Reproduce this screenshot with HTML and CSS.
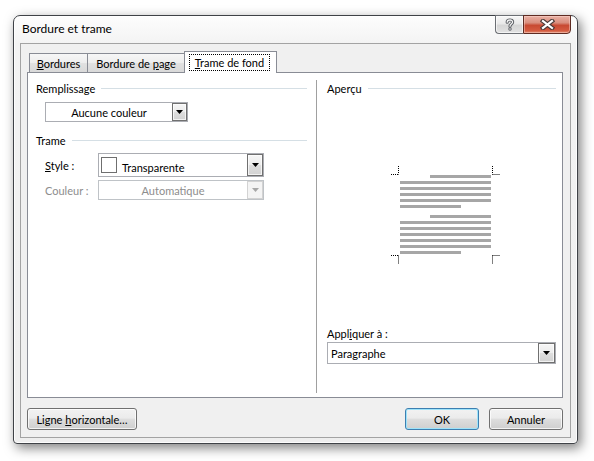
FILE: index.html
```html
<!DOCTYPE html>
<html lang="fr">
<head>
<meta charset="utf-8">
<title>Bordure et trame</title>
<link rel="stylesheet" href="styles.css">
</head>
<body>
<div class="window">
  <div class="titlebar">
    <span class="title">Bordure et trame</span>
    <div class="caption-btns">
      <div class="cbtn help">
        <svg width="10" height="13" viewBox="0 0 10 13"><path d="M2.2 4.2 C2.2 1.4 7.6 1.2 7.6 4 C7.6 6 5 6.2 5 8.2" fill="none" stroke="#5a5d62" stroke-width="3.2" stroke-linecap="round"/><path d="M2.2 4.2 C2.2 1.4 7.6 1.2 7.6 4 C7.6 6 5 6.2 5 8.2" fill="none" stroke="#f4f4f4" stroke-width="1.3" stroke-linecap="round"/><circle cx="5" cy="11" r="1.7" fill="#5a5d62"/><circle cx="5" cy="11" r="0.8" fill="#f4f4f4"/></svg>
      </div>
      <div class="cbtn close">
        <svg width="15" height="11" viewBox="0 0 15 11"><path d="M3 2 L12 9 M12 2 L3 9" stroke="#4a3a38" stroke-width="4.4" stroke-linecap="square"/><path d="M3 2 L12 9 M12 2 L3 9" stroke="#ffffff" stroke-width="2.2" stroke-linecap="square"/></svg>
      </div>
    </div>
  </div>
  <div class="client">
    <div class="tabs">
      <div class="tab t1"><span><u>B</u>ordures</span></div>
      <div class="tab t2"><span>Bordure de <u>p</u>age</span></div>
      <div class="tab active"><span class="focus"><u>T</u>rame de fond</span></div>
    </div>
    <div class="panel">
      <div class="col col-left">
        <div class="ghead"><span>Remplissage</span></div>
        <div class="combo combo-fill">
          <span class="combo-text center">Aucune couleur</span>
          <span class="dd"><svg width="7" height="4" viewBox="0 0 7 4"><polygon points="0,0 7,0 3.5,4" fill="#000"/></svg></span>
        </div>
        <div class="ghead ghead-trame"><span>Trame</span></div>
        <div class="field-row row-style">
          <span class="flabel"><u>S</u>tyle :</span>
          <div class="combo combo-style">
            <span class="swatch"></span>
            <span class="combo-text style-text">Transparente</span>
            <span class="dd"><svg width="7" height="4" viewBox="0 0 7 4"><polygon points="0,0 7,0 3.5,4" fill="#000"/></svg></span>
          </div>
        </div>
        <div class="field-row row-color disabled">
          <span class="flabel">Couleur :</span>
          <div class="combo combo-color">
            <span class="combo-text center">Automatique</span>
            <span class="dd"><svg width="7" height="4" viewBox="0 0 7 4"><polygon points="0,0 7,0 3.5,4" fill="#a7a7a7"/></svg></span>
          </div>
        </div>
      </div>
      <div class="vsep"></div>
      <div class="col col-right">
        <div class="ghead"><span>Aperçu</span></div>
        <svg class="preview" width="109" height="98" viewBox="0 0 109 98">
          <g stroke="#000" stroke-width="1" stroke-dasharray="1 1" fill="none">
            <path d="M7.5 0 V8.5 M0 8.5 H7.5"/>
            <path d="M101.5 0 V8.5 M101.5 8.5 H109"/>
            <path d="M0 89.5 H7.5 M7.5 89.5 V98"/>
            <path d="M101.5 89.5 H109 M101.5 89.5 V98"/>
          </g>
          <g fill="#a6a6a6">
            <rect x="39" y="9" width="61" height="3"/>
            <rect x="9" y="15" width="91" height="3"/>
            <rect x="9" y="21" width="91" height="3"/>
            <rect x="9" y="27" width="91" height="3"/>
            <rect x="9" y="33" width="91" height="3"/>
            <rect x="9" y="39" width="61" height="3"/>
            <rect x="39" y="49" width="61" height="3"/>
            <rect x="9" y="55" width="91" height="3"/>
            <rect x="9" y="61" width="91" height="3"/>
            <rect x="9" y="67" width="91" height="3"/>
            <rect x="9" y="73" width="91" height="3"/>
            <rect x="9" y="79" width="91" height="3"/>
            <rect x="9" y="85" width="61" height="3"/>
          </g>
        </svg>
        <div class="apply">
          <div class="apply-label">Appl<u>i</u>quer à :</div>
          <div class="combo combo-apply">
            <span class="combo-text">Paragraphe</span>
            <span class="dd"><svg width="7" height="4" viewBox="0 0 7 4"><polygon points="0,0 7,0 3.5,4" fill="#000"/></svg></span>
          </div>
        </div>
      </div>
    </div>
    <div class="bottom-bar">
      <div class="btn btn-ligne"><span>Ligne <u>h</u>orizontale…</span></div>
      <div class="btn btn-ok"><span>OK</span></div>
      <div class="btn btn-cancel"><span>Annuler</span></div>
    </div>
  </div>
</div>
</body>
</html>
```
FILE: styles.css
```css
* { box-sizing: border-box; }
html, body { margin: 0; }
body {
  background: #ffffff;
  padding: 15px 0 0 13px;
  width: 594px;
  height: 461px;
  overflow: hidden;
  font-family: Lato, "Liberation Sans", sans-serif;
  font-size: 11px;
  color: #000;
}
u { text-decoration: underline; text-underline-offset: 1px; }

.window {
  width: 565px;
  height: 429px;
  border: 1px solid #3f4247;
  border-radius: 7px 7px 4px 4px;
  background: linear-gradient(#fdfdfd, #f3f3f3 28px, #eeeeee);
  box-shadow: 3px 4px 12px rgba(0,0,0,0.5), inset 0 0 0 1px rgba(255,255,255,0.8);
  display: flex;
  flex-direction: column;
}

.titlebar {
  flex: none;
  height: 27px;
  display: flex;
  align-items: flex-start;
  padding: 0 6px 0 8px;
}
.title {
  font-size: 12px;
  line-height: 15px;
  margin-top: 5px;
}
.caption-btns {
  margin-left: auto;
  margin-top: -1px;
  display: flex;
}
.cbtn {
  height: 19px;
  display: flex;
  align-items: center;
  justify-content: center;
  border: 1px solid #6b6e73;
}
.help {
  width: 28px;
  border-right: none;
  border-radius: 0 0 0 4px;
  background: linear-gradient(#f7f7f7, #e9e9e9 45%, #d6d6d6 55%, #e2e2e2);
  box-shadow: inset 0 0 0 1px rgba(255,255,255,0.6);
}
.close {
  width: 48px;
  border-color: #5e2b22;
  border-radius: 0 0 4px 0;
  background: linear-gradient(#eab1a5, #d98e7d 40%, #c84a32 55%, #d45a3f 85%, #e08a70);
  box-shadow: inset 0 0 0 1px rgba(255,220,210,0.45);
}

.client {
  flex: 1;
  margin: 0 6px 5px 6px;
  border: 1px solid #a3a3a3;
  background: #f0f0f0;
  padding: 7px 7px 7px 6px;
  display: flex;
  flex-direction: column;
}

.tabs {
  flex: none;
  height: 21px;
  display: flex;
  align-items: flex-end;
  padding-left: 2px;
  position: relative;
  z-index: 1;
}
.tab {
  height: 19px;
  border: 1px solid #898c95;
  border-bottom: none;
  background: linear-gradient(#f7f7f7, #ededed 50%, #e1e1e1 52%, #d9d9d9);
  display: flex;
  align-items: center;
  justify-content: center;
  line-height: 13px;
}
.tab.t1 { width: 59px; }
.tab.t2 { width: 96px; border-left: none; border-right: none; }
.tab.active {
  width: 93px;
  height: 22px;
  margin-bottom: -1px;
  background: #ffffff;
  padding-right: 2px;
}
.focus {
  outline: 1px dotted #000;
  padding: 1px 5px;
  line-height: 13px;
}

.panel {
  flex: none;
  height: 326px;
  border: 1px solid #898c95;
  background: #ffffff;
  display: flex;
  padding: 0 6px 0 8px;
}
.col-left { width: 271px; padding-top: 8px; }
.vsep {
  width: 1px;
  background: #a0a0a0;
  margin: 7px 10px 4px 9px;
}
.col-right {
  width: 229px;
  padding-top: 8px;
  padding-bottom: 33px;
  display: flex;
  flex-direction: column;
}

.ghead {
  display: flex;
  align-items: center;
  height: 15px;
  line-height: 15px;
}
.ghead::after {
  content: "";
  flex: 1;
  height: 1px;
  background: #d5dfe5;
  margin-left: 6px;
}
.ghead-trame { margin-top: 11px; }

.combo {
  display: flex;
  align-items: stretch;
  border: 1px solid #abadb3;
  background: #ffffff;
}
.combo-text {
  flex: 1;
  display: flex;
  align-items: center;
  white-space: nowrap;
}
.combo-text.center { justify-content: center; }
.dd {
  flex: none;
  display: flex;
  align-items: center;
  justify-content: center;
  border: 1px solid #707070;
  background: linear-gradient(#f6f6f6, #ececec 50%, #dedede 52%, #d2d2d2);
  box-shadow: inset 0 0 0 1px rgba(255,255,255,0.7);
}

.combo-fill {
  width: 143px;
  height: 20px;
  margin: 6px 0 0 9px;
}
.combo-fill .dd { width: 15px; }

.field-row {
  display: flex;
  align-items: center;
  margin-left: 9px;
}
.flabel { width: 53px; }
.row-style { margin-top: 5px; }
.combo-style { width: 166px; height: 24px; }
.combo-style .dd { width: 16px; }
.swatch {
  flex: none;
  width: 16px;
  height: 16px;
  border: 1px solid #6f6f6f;
  background: #fff;
  align-self: center;
  margin-left: 2px;
}
.style-text { padding: 4px 0 0 5px; }

.row-color { margin-top: 3px; }
.row-color .flabel { color: #8d8d8d; }
.combo-color { width: 166px; height: 20px; border-color: #bfc3c7; }
.combo-color .combo-text { color: #8d8d8d; }
.combo-color .dd {
  width: 16px;
  border-color: #d3d3d3;
  background: #f4f4f4;
  box-shadow: none;
}

.preview {
  display: block;
  margin: 70px 0 0 64px;
}
.apply { margin-top: auto; }
.apply-label { line-height: 14px; }
.combo-apply {
  margin-top: 1px;
  height: 22px;
}
.combo-apply .combo-text { padding-left: 3px; }
.combo-apply .dd { width: 17px; }

.bottom-bar {
  flex: none;
  margin-top: 10px;
  height: 22px;
  display: flex;
  gap: 10px;
}
.btn {
  height: 22px;
  display: flex;
  align-items: center;
  justify-content: center;
  border: 1px solid #707070;
  border-radius: 3px;
  background: linear-gradient(#f2f2f2, #ebebeb 45%, #dddddd 52%, #cfcfcf);
  box-shadow: inset 0 0 0 1px rgba(255,255,255,0.75);
}
.btn-ligne { width: 110px; margin-right: auto; }
.btn-ok {
  width: 74px;
  border-color: #3c7fb1;
  box-shadow: inset 0 0 0 1px #9ee3fa;
}
.btn-cancel { width: 74px; }
```
